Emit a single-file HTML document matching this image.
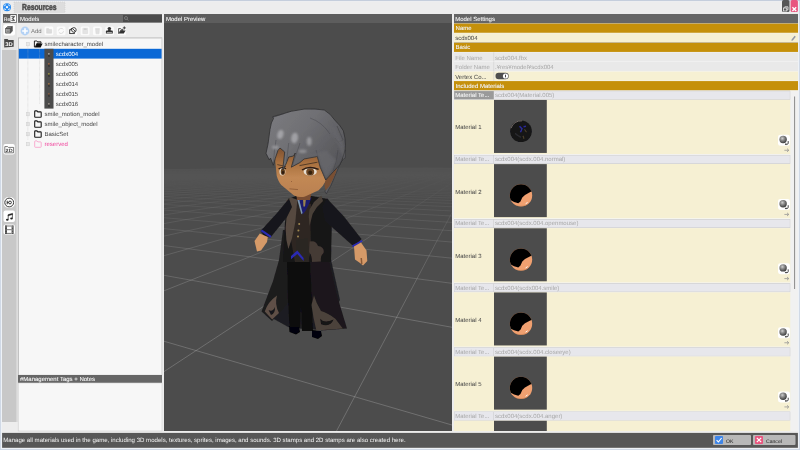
<!DOCTYPE html>
<html><head><meta charset="utf-8">
<style>
*{margin:0;padding:0;box-sizing:border-box}
html,body{width:800px;height:450px;overflow:hidden;background:#ececec;text-rendering:geometricPrecision;font-family:"Liberation Sans",sans-serif;font-size:6px;color:#333}
.a{position:absolute}
.t{position:absolute;white-space:nowrap;line-height:10px;font-size:6px;color:#444}
.h{position:absolute;white-space:nowrap;line-height:9px;font-size:6px;color:#ececec;text-shadow:0 0 .3px rgba(255,255,255,.6)}
.g{color:#a8a8a8}
svg{position:absolute;left:0;top:0}
</style></head><body>

<svg width="800" height="450" viewBox="0 0 800 450">
<rect x="0.00" y="0.00" width="800.00" height="450.00" fill="#ccd6e4" />
<rect x="0.00" y="0.00" width="800.00" height="1.00" fill="#c0cad8" />
<rect x="0.90" y="0.90" width="798.20" height="448.20" fill="#eef2f7" />
<rect x="2.00" y="1.30" width="796.00" height="446.50" fill="#ededed" />
<circle cx="7" cy="7.2" r="4" fill="#2b8df2"/>
<rect x="14.00" y="2.00" width="51.00" height="10.50" fill="#dddddd" stroke="#c8c8c8" stroke-width=".5" stroke-dasharray="1 1"/>
<rect x="782.00" y="0.00" width="7.50" height="12.00" fill="#565656" rx="1.5"/>
<rect x="790.60" y="0.00" width="7.30" height="12.00" fill="#e8557f" rx="1.5"/>
<rect x="3.00" y="14.00" width="13.80" height="8.80" fill="#5f5f5f" />
<rect x="10.30" y="15.00" width="5.80" height="7.00" fill="#fff" rx=".8"/>
<rect x="18.00" y="14.00" width="144.00" height="8.80" fill="#6b6b6b" />
<rect x="123.00" y="15.00" width="39.00" height="7.00" fill="#4b4b4b" />
<rect x="164.00" y="14.00" width="288.00" height="9.00" fill="#5d5d5d" />
<rect x="454.00" y="14.00" width="344.00" height="9.60" fill="#666" />
<rect x="2.00" y="23.00" width="15.00" height="27.00" fill="#e6e6e6" />
<rect x="2.00" y="50.00" width="14.70" height="372.00" fill="#c8c8c8" />
<rect x="16.70" y="50.00" width="1.30" height="372.00" fill="#dedede" />
<rect x="3.40" y="24.20" width="11.60" height="11.40" fill="#fff" rx="2"/>
<rect x="3.40" y="144.00" width="11.40" height="10.50" fill="#fff" rx="2"/>
<rect x="3.50" y="197.00" width="11.50" height="11.00" fill="#fff" rx="5"/>
<rect x="3.50" y="210.50" width="11.50" height="11.50" fill="#fff" rx="2"/>
<rect x="3.50" y="224.50" width="11.50" height="10.00" fill="#fff" rx="2"/>
<circle cx="25" cy="31" r="4.4" fill="#b4d2f5"/>
<rect x="44.50" y="26.50" width="8.80" height="8.80" fill="#fbfbfb" rx="1.5"/>
<rect x="56.70" y="26.50" width="8.80" height="8.80" fill="#fbfbfb" rx="1.5"/>
<rect x="68.50" y="26.50" width="8.80" height="8.80" fill="#fbfbfb" rx="1.5"/>
<rect x="80.70" y="26.50" width="8.80" height="8.80" fill="#fbfbfb" rx="1.5"/>
<rect x="93.00" y="26.50" width="8.80" height="8.80" fill="#fbfbfb" rx="1.5"/>
<rect x="105.20" y="26.50" width="8.80" height="8.80" fill="#fbfbfb" rx="1.5"/>
<rect x="117.30" y="26.50" width="8.80" height="8.80" fill="#fbfbfb" rx="1.5"/>
<rect x="18.20" y="37.50" width="143.80" height="337.50" fill="#f7f7f7" stroke="#d8d8d8" stroke-width=".6"/>
<rect x="18.20" y="37.40" width="143.80" height="1.10" fill="#c6c6c6" />
<rect x="161.60" y="38.00" width="0.60" height="337.00" fill="#cfcfcf" />
<rect x="18.05" y="38.00" width="0.85" height="393.00" fill="#bcbcbc" />
<rect x="18.80" y="48.80" width="142.80" height="9.80" fill="#0a68d6" />
<rect x="44.40" y="48.80" width="9.10" height="59.80" fill="#4b4b4b" />
<rect x="18.00" y="375.00" width="144.00" height="8.40" fill="#666" />
<rect x="18.20" y="383.00" width="143.80" height="48.00" fill="#f7f7f7" stroke="#d4d4d4" stroke-width=".6"/>
<rect x="164.00" y="23.00" width="288.00" height="408.00" fill="#4c4c4c" />
<rect x="454.00" y="23.58" width="344.00" height="407.42" fill="#f6f6f6" />
<rect x="454.00" y="23.58" width="344.00" height="9.18" fill="#c5900a" />
<rect x="454.00" y="33.17" width="344.00" height="9.18" fill="#f6f0d3" />
<rect x="454.00" y="42.05" width="344.00" height="0.50" fill="#9a9a9a" />
<rect x="454.00" y="42.75" width="344.00" height="9.18" fill="#c5900a" />
<rect x="454.00" y="52.33" width="40.00" height="9.18" fill="#e9e9e9" />
<rect x="494.40" y="52.33" width="303.60" height="9.18" fill="#e9e9e9" />
<rect x="454.00" y="61.92" width="40.00" height="9.18" fill="#e9e9e9" />
<rect x="494.40" y="61.92" width="303.60" height="9.18" fill="#e9e9e9" />
<rect x="454.00" y="71.50" width="40.00" height="9.18" fill="#f6f0d3" />
<rect x="494.40" y="71.50" width="303.60" height="9.18" fill="#f6f0d3" />
<rect x="454.00" y="81.08" width="344.00" height="9.18" fill="#c5900a" />
<rect x="790.00" y="90.67" width="8.00" height="340.33" fill="#f1f1f1" />
<rect x="794.00" y="96.50" width="1.10" height="192.50" fill="#949494" />
<rect x="454.00" y="90.77" width="336.20" height="8.88" fill="#c2c2c2" />
<rect x="454.30" y="91.17" width="39.30" height="8.08" fill="#9a9a9a" />
<rect x="494.00" y="91.17" width="295.90" height="8.08" fill="#e7e7ec" />
<rect x="454.00" y="99.85" width="336.30" height="54.28" fill="#f6f0d3" />
<rect x="494.00" y="99.95" width="52.80" height="53.00" fill="#4c4c4c" />
<rect x="454.00" y="154.93" width="336.20" height="8.88" fill="#c2c2c2" />
<rect x="454.30" y="155.33" width="39.30" height="8.08" fill="#e7e7ec" />
<rect x="494.00" y="155.33" width="295.90" height="8.08" fill="#e7e7ec" />
<rect x="454.00" y="164.02" width="336.30" height="54.28" fill="#f6f0d3" />
<rect x="494.00" y="164.12" width="52.80" height="53.00" fill="#4c4c4c" />
<rect x="454.00" y="219.10" width="336.20" height="8.88" fill="#c2c2c2" />
<rect x="454.30" y="219.50" width="39.30" height="8.08" fill="#e7e7ec" />
<rect x="494.00" y="219.50" width="295.90" height="8.08" fill="#e7e7ec" />
<rect x="454.00" y="228.18" width="336.30" height="54.28" fill="#f6f0d3" />
<rect x="494.00" y="228.28" width="52.80" height="53.00" fill="#4c4c4c" />
<rect x="454.00" y="283.27" width="336.20" height="8.88" fill="#c2c2c2" />
<rect x="454.30" y="283.67" width="39.30" height="8.08" fill="#e7e7ec" />
<rect x="494.00" y="283.67" width="295.90" height="8.08" fill="#e7e7ec" />
<rect x="454.00" y="292.35" width="336.30" height="54.28" fill="#f6f0d3" />
<rect x="494.00" y="292.45" width="52.80" height="53.00" fill="#4c4c4c" />
<rect x="454.00" y="347.43" width="336.20" height="8.88" fill="#c2c2c2" />
<rect x="454.30" y="347.83" width="39.30" height="8.08" fill="#e7e7ec" />
<rect x="494.00" y="347.83" width="295.90" height="8.08" fill="#e7e7ec" />
<rect x="454.00" y="356.52" width="336.30" height="54.28" fill="#f6f0d3" />
<rect x="494.00" y="356.62" width="52.80" height="53.00" fill="#4c4c4c" />
<rect x="454.00" y="411.60" width="336.20" height="8.88" fill="#c2c2c2" />
<rect x="454.30" y="412.00" width="39.30" height="8.08" fill="#e7e7ec" />
<rect x="494.00" y="412.00" width="295.90" height="8.08" fill="#e7e7ec" />
<rect x="454.00" y="420.68" width="336.30" height="10.32" fill="#f6f0d3" />
<rect x="494.00" y="420.78" width="52.80" height="10.22" fill="#4c4c4c" />
<rect x="2.10" y="432.90" width="795.80" height="14.90" fill="#575757" />
<rect x="713.00" y="435.00" width="38.00" height="10.00" fill="#b8b8b8" rx="1"/>
<rect x="753.00" y="435.00" width="42.50" height="10.00" fill="#b8b8b8" rx="1"/>
<rect x="715.00" y="436.00" width="8.00" height="8.00" fill="#3f86e8" rx="1"/>
<rect x="755.00" y="436.00" width="8.00" height="8.00" fill="#e8557f" rx="1"/>
</svg>
<svg width="800" height="450" viewBox="0 0 800 450">
<defs><linearGradient id="gf" x1="0" y1="0" x2="0" y2="1" gradientUnits="objectBoundingBox">
</linearGradient>
<linearGradient id="fade" gradientUnits="userSpaceOnUse" x1="0" y1="167" x2="0" y2="431">
<stop offset="0" stop-color="#fff" stop-opacity="0"/>
<stop offset="0.004" stop-color="#fff" stop-opacity=".06"/>
<stop offset="0.03" stop-color="#fff" stop-opacity=".08"/>
<stop offset="0.07" stop-color="#fff" stop-opacity=".12"/>
<stop offset="0.125" stop-color="#fff" stop-opacity=".22"/>
<stop offset="0.23" stop-color="#fff" stop-opacity=".45"/>
<stop offset="0.38" stop-color="#fff" stop-opacity=".72"/>
<stop offset="0.57" stop-color="#fff" stop-opacity=".95"/>
<stop offset="1" stop-color="#fff" stop-opacity="1"/>
</linearGradient>
<mask id="gm" maskUnits="userSpaceOnUse" x="164" y="23" width="288" height="408"><rect x="164" y="160" width="288" height="271" fill="url(#fade)"/></mask>
<clipPath id="pc"><rect x="164" y="23" width="288" height="408"/></clipPath>
</defs>
<g clip-path="url(#pc)"><g mask="url(#gm)" stroke="#b8b8b8" stroke-width=".55" fill="none" stroke-opacity=".62">
<path d="M333.9 436.0L457.0 203.0M457.0 426.5L159.0 339.8M159.0 374.9L457.0 179.5M457.0 328.2L159.0 274.4M159.0 292.8L457.0 174.5M457.0 284.0L159.0 244.9M159.0 257.1L457.0 172.4M457.0 258.7L159.0 228.1M159.0 237.2L457.0 171.2M457.0 242.5L159.0 217.3M159.0 224.5L457.0 170.4M457.0 231.1L159.0 209.7M159.0 215.7L457.0 169.9M457.0 222.7L159.0 204.1M159.0 209.3L457.0 169.5M457.0 216.3L159.0 199.8M159.0 204.3L457.0 169.2M457.0 211.2L159.0 196.4M159.0 200.4L457.0 169.0M457.0 207.0L159.0 193.6M159.0 197.2L457.0 168.8M457.0 203.6L159.0 191.4M159.0 194.6L457.0 168.7M457.0 200.7L159.0 189.4M159.0 192.4L457.0 168.5M457.0 198.2L159.0 187.8M159.0 190.5L457.0 168.4M457.0 196.1L159.0 186.4M159.0 188.9L457.0 168.3M457.0 194.2L159.0 185.1M159.0 187.5L457.0 168.2M457.0 192.6L159.0 184.0M159.0 186.2L457.0 168.2M457.0 191.1L159.0 183.1M159.0 185.2L457.0 168.1M457.0 189.8L159.0 182.2M159.0 184.2L457.0 168.0M457.0 188.7L159.0 181.4M159.0 183.3L457.0 168.0M457.0 187.6L159.0 180.7M159.0 182.5L456.2 168.0M457.0 186.7L159.0 180.1M159.0 181.8L455.2 168.0M457.0 185.8L159.0 179.5M159.0 181.1L454.3 168.0M457.0 185.0L159.0 179.0M159.0 180.5L453.3 168.0M457.0 184.3L159.0 178.5M159.0 180.0L452.4 168.0M457.0 183.6L159.0 178.1M159.0 179.5L451.4 168.0M457.0 183.0L159.0 177.6M159.0 179.0L450.5 168.0M457.0 182.4L159.0 177.3M159.0 178.6L449.6 168.0M457.0 181.9L159.0 176.9M159.0 178.2L448.6 168.0M457.0 181.4L159.0 176.6M159.0 177.8L447.7 168.0M457.0 180.9L159.0 176.3M159.0 177.4L446.8 168.0M457.0 180.5L159.0 176.0M159.0 177.1L445.9 168.0M457.0 180.0L159.0 175.7M159.0 176.8L444.9 168.0M457.0 179.7L159.0 175.4M159.0 176.5L444.0 168.0M457.0 179.3L159.0 175.2M159.0 176.2L443.1 168.0M457.0 178.9L159.0 175.0M159.0 176.0L442.2 168.0M457.0 178.6L159.0 174.7M159.0 175.7L441.3 168.0M457.0 178.3L159.0 174.5M159.0 175.5L440.4 168.0M457.0 178.0L159.0 174.3M159.0 175.3L439.4 168.0M457.0 177.7L159.0 174.2M159.0 175.0L438.5 168.0M457.0 177.5L159.0 174.0M159.0 174.9L437.6 168.0M457.0 177.2L159.0 173.8M159.0 174.7L436.7 167.9M457.0 177.0L159.0 173.6M159.0 174.5L435.8 167.9M457.0 176.8L159.0 173.5M159.0 174.3L434.9 167.9M457.0 176.5L159.0 173.4M159.0 174.1L434.0 167.9M457.0 176.3L159.0 173.2M159.0 174.0L433.1 167.9M457.0 176.1L159.0 173.1M159.0 173.8L432.2 167.9M457.0 175.9L159.0 173.0M159.0 173.7L431.3 167.9M457.0 175.8L159.0 172.8M159.0 173.6L430.4 167.9M457.0 175.6L159.0 172.7M159.0 173.4L429.5 167.9M457.0 175.4L159.0 172.6M159.0 173.3L428.7 167.9M457.0 175.2L159.0 172.5M159.0 173.2L427.8 167.9M457.0 175.1L159.0 172.4M159.0 173.1L426.9 167.9M457.0 174.9L159.0 172.3M159.0 172.9L426.0 167.9M457.0 174.8L159.0 172.2M159.0 172.8L425.1 167.9M457.0 174.7L159.0 172.1M159.0 172.7L424.2 167.9M457.0 174.5L159.0 172.0M159.0 172.6L423.4 167.9M457.0 174.4L159.0 171.9M159.0 172.5L422.5 167.9M457.0 174.3L159.0 171.8M159.0 172.4L421.6 167.9M457.0 174.1L159.0 171.8M159.0 172.3L420.7 167.9M457.0 174.0L159.0 171.7M159.0 172.3L419.9 167.9M457.0 173.9L159.0 171.6M159.0 172.2L419.0 167.9M457.0 173.8L159.0 171.5M159.0 172.1L418.1 167.9M457.0 173.7L159.0 171.5M159.0 172.0L417.3 167.9M457.0 173.6L159.0 171.4M159.0 171.9L416.4 167.9M457.0 173.5L159.0 171.3M159.0 171.9L415.5 167.9M457.0 173.4L159.0 171.3M159.0 171.8L414.7 167.9M457.0 173.3L159.0 171.2M159.0 171.7L413.8 167.9M457.0 173.2L159.0 171.1M159.0 171.6L413.0 167.9M457.0 173.1L159.0 171.1M159.0 171.6L412.1 167.9M457.0 173.0L159.0 171.0M159.0 171.5L411.2 167.9M457.0 172.9L159.0 171.0M159.0 171.4L410.4 167.9M457.0 172.9L159.0 170.9M159.0 171.4L409.5 167.9M457.0 172.8L159.0 170.8M159.0 171.3L408.7 167.9M457.0 172.7L159.0 170.8M159.0 171.3L407.8 167.9M457.0 172.6L159.0 170.7M159.0 171.2L407.0 167.9M457.0 172.6L159.0 170.7M159.0 171.2L406.2 167.9M457.0 172.5L159.0 170.7M159.0 171.1L405.3 167.9M457.0 172.4L159.0 170.6M159.0 171.1L404.5 167.9M457.0 172.3L159.0 170.6M159.0 171.0L403.6 167.9M457.0 172.3L159.0 170.5M159.0 171.0L402.8 167.9M457.0 172.2L159.0 170.5M159.0 170.9L402.0 167.9M457.0 172.2L159.0 170.4M159.0 170.9L401.1 167.9M457.0 172.1L159.0 170.4M159.0 170.8L400.3 167.9M457.0 172.0L159.0 170.3M159.0 170.8L399.5 167.9M457.0 172.0L159.0 170.3M159.0 170.7L398.6 167.9M457.0 171.9L159.0 170.3M159.0 170.7L397.8 167.9M457.0 171.9L159.0 170.2M159.0 170.6L397.0 167.9M457.0 171.8L159.0 170.2M159.0 170.6L396.2 167.9M457.0 171.7L159.0 170.2M159.0 170.6L395.3 167.9M457.0 171.7L159.0 170.1M159.0 170.5L394.5 167.9M457.0 171.6L159.0 170.1M159.0 170.5L393.7 167.9M457.0 171.6L159.0 170.1M159.0 170.4L392.9 167.9M457.0 171.5L159.0 170.0M159.0 170.4L392.1 167.9M457.0 171.5L159.0 170.0M159.0 170.4L391.3 167.9M457.0 171.5L159.0 170.0M159.0 170.3L390.4 167.9M457.0 171.4L159.0 169.9M159.0 170.3L389.6 167.9M457.0 171.4L159.0 169.9M159.0 170.3L388.8 167.9M457.0 171.3L159.0 169.9M159.0 170.2L388.0 167.9M457.0 171.3L159.0 169.8M159.0 170.2L387.2 167.9M457.0 171.2L159.0 169.8M159.0 170.2L386.4 167.9M457.0 171.2L159.0 169.8M159.0 170.1L385.6 167.9M457.0 171.1L159.0 169.8M159.0 170.1L384.8 167.9M457.0 171.1L159.0 169.7M159.0 170.1L384.0 167.9M457.0 171.1L159.0 169.7M159.0 170.0L383.2 167.9M457.0 171.0L159.0 169.7M159.0 170.0L382.4 167.9M457.0 171.0L159.0 169.7M159.0 170.0L381.6 167.9M457.0 171.0L159.0 169.6M159.0 170.0L380.8 167.9M457.0 170.9L159.0 169.6M159.0 169.9L380.0 167.9M457.0 170.9L159.0 169.6M159.0 169.9L379.2 167.9M457.0 170.8L159.0 169.6M159.0 169.9L378.5 167.9M457.0 170.8L159.0 169.5M159.0 169.9L377.7 167.9M457.0 170.8L159.0 169.5M159.0 169.8L376.9 167.9M457.0 170.7L159.0 169.5M159.0 169.8L376.1 167.9M457.0 170.7L159.0 169.5M159.0 169.8L375.3 167.9M457.0 170.7L159.0 169.5M159.0 169.8L374.5 167.9M457.0 170.7L159.0 169.4M159.0 169.7L373.8 167.9M457.0 170.6L159.0 169.4M159.0 169.7L373.0 167.9M457.0 170.6L159.0 169.4M159.0 169.7L372.2 167.9M457.0 170.6L159.0 169.4M159.0 169.7L371.4 167.9M457.0 170.5L159.0 169.4M159.0 169.6L370.6 167.9M457.0 170.5L159.0 169.3"/>
</g>
<defs>
<filter id="soft" x="-5%" y="-5%" width="110%" height="110%"><feGaussianBlur stdDeviation="0.35"/></filter>
<filter id="soft2" x="-20%" y="-20%" width="140%" height="140%"><feGaussianBlur stdDeviation="1.2"/></filter>
<linearGradient id="hairg" x1="0" y1="0" x2="1" y2=".7"><stop offset="0" stop-color="#7c7c80"/><stop offset=".45" stop-color="#707074"/><stop offset=".8" stop-color="#5e5e62"/><stop offset="1" stop-color="#545458"/></linearGradient>
<linearGradient id="faceg" x1="0" y1="0" x2="0" y2="1"><stop offset="0" stop-color="#7d5030"/><stop offset=".3" stop-color="#a8703f"/><stop offset=".6" stop-color="#c28854"/><stop offset="1" stop-color="#b98050"/></linearGradient>
</defs>
<g filter="url(#soft)">
<!-- coat back (between panels) -->
<polygon points="284,255 330,255 340,300 322,330 290,328 272,318" fill="#1f1e22"/>
<!-- left coat panel -->
<polygon points="283,230 279,260 273,281 261.5,311.5 272,321 284,308 290,300 291,260 292,230" fill="#1d1b1e"/>
<!-- right coat panel -->
<polygon points="308,230 308.5,262 313,313 321,330.5 347,328.5 337,295.5 329,260 327,225" fill="#1b191c"/>
<!-- legs -->
<polygon points="287,262 310,262 312,300 313,331 302,331 301,306 300,328 289.5,328 288,300" fill="#0e0e10"/>
<!-- boots -->
<polygon points="289,326 299,327 300,332 296,334.5 289.5,332" fill="#060607"/>
<polygon points="312,330 321,331 322,336 318,339 312,337" fill="#060607"/>
<!-- coat flame patterns -->
<path d="M264.8 311.6 Q267.5 302 277 295.4 Q274.4 304 279 313 L272.2 319.6 Z" fill="#5e5046"/>
<path d="M268.6 310 Q272.5 312.4 275 307 Q275.4 313.4 271 315 Z" fill="#18161a"/>
<path d="M311.5 305 L314 295.6 Q316 303 321 311 Q328 313 335.3 318.7 L342.8 328.6 L316.4 330.6 L313.6 318 Z" fill="#4c423b"/>
<path d="M320.2 318.7 Q324 323.7 333.6 319.6 Q330.4 327.4 321.1 324.2 Z" fill="#141214"/>
<!-- torso -->
<polygon points="288,199 296,196 312,196 328,199 332,215 331,262 283,262 285,222" fill="#171518"/>
<!-- vest -->
<polygon points="295,200 311,204 310.5,226 311,250 308,262 295,262 291,240 293,215" fill="#2f2824"/>
<polygon points="296,240 308,238 309,262 296,262" fill="#2b2624"/>
<!-- lapels -->
<polygon points="286.4,200 291,197.5 297.3,199.8 296.2,212 295.3,222 292,238 288.4,249 286.4,240 285.6,228 287,212" fill="#564a41"/>
<polygon points="321.3,195.5 323,201 317,207 312.6,214 309.5,226 308.8,216 309.6,209.6 314,202" fill="#4a4038"/>
<path d="M309.6 241.6 Q316 240 318 246 Q325 247 323.5 253 Q320 256 321 261.5 L312 262 Q312 255 309 252 Z" fill="#453a34"/>
<path d="M291 256 L297.3 250.6 L303.6 258 L303.6 261 L297.3 254 L291 259.2Z" fill="#2a2ab4"/>
<!-- shirt -->
<polygon points="297.5,198 311.5,197.5 309.5,203 305.5,211 302.6,214.5" fill="#1d1d6e"/>
<polygon points="297.3,199.5 299.2,199.5 302.6,213 301.4,214.2" fill="#7f97ad"/>
<polygon points="303,198.5 306,198.5 305,206.5 303.4,206.5" fill="#9a8250"/>
<circle cx="299.2" cy="224" r="1" fill="#a08850"/><circle cx="298.4" cy="230.5" r="1" fill="#a08850"/><circle cx="298" cy="236.6" r="1" fill="#a08850"/>
<!-- left arm -->
<polygon points="289,198.5 277,213 260.5,231 264,236 270.5,237.5 287,217 292,207" fill="#19181b"/>
<polygon points="260.3,231 262.3,229.8 271.5,236 270.4,237.8" fill="#2a2ab4"/>
<polygon points="259.8,233.5 267.8,237 267,242 261,250.5 257,251.5 254.5,241" fill="#d69a68"/>
<!-- right arm -->
<polygon points="327,198.5 344,216.5 361.5,239 358,243.5 352.3,245.3 325,221 322,207" fill="#19181b"/>
<polygon points="352,245.6 361.8,240 362.6,241.6 353,247.2" fill="#2a2ab4"/>
<polygon points="354,246.5 361,242.5 366.5,250.5 367.3,261 363,265.5 360,263 355,259.5" fill="#d69a68"/>
<polygon points="360.5,258 362,258 362.5,264 361,264" fill="#8a5a38"/>
<!-- back hair right -->
<polygon points="336,150 345.5,150 345.1,158 342,160.2 339.7,164.9 335,175.8 331.1,185.1 326.4,193.9 324.8,191 328.5,185 331,176 335,163" fill="#5c5c60" stroke="#2e2e30" stroke-width=".6"/>
<!-- neck -->
<polygon points="296,192 312,190 310,200 297,200" fill="#7a4e30"/>
<!-- face -->
<path d="M274.5 148 L275.3 162 L276.7 175.7 Q278.5 182 281.3 185 L294 195.5 Q300 198 305 196.5 L318.7 190.3 Q323 186.5 325.7 181 L334 168 L334 148 Z" fill="url(#faceg)"/>
<!-- ear shadow -->
<polygon points="326,178 331,170 338,162.5 336,172 333,179 329.5,186 325.5,190.5 324.5,185" fill="#7a4f32"/>
<!-- eyes -->
<ellipse cx="282.4" cy="171.6" rx="3" ry="3.9" fill="#e6ddd0"/>
<ellipse cx="282.9" cy="171.8" rx="2.1" ry="3.3" fill="#63401f"/>
<ellipse cx="283" cy="172.4" rx="1.1" ry="1.7" fill="#2e1c10"/>
<path d="M278.6 169 Q282 166.2 286 168.8" stroke="#2a1c14" stroke-width="1.3" fill="none"/>
<ellipse cx="310.2" cy="171.8" rx="6.6" ry="3.9" fill="#e6ddd0"/>
<ellipse cx="310.2" cy="171.9" rx="4" ry="3.7" fill="#714a26"/>
<ellipse cx="310.2" cy="172.6" rx="2" ry="2.1" fill="#36200f"/>
<path d="M302 170 Q309 165.2 318.6 169.4" stroke="#2a1c14" stroke-width="1.5" fill="none"/>
<path d="M277.3 164.6 L286 166.6" stroke="#4a3424" stroke-width=".8"/>
<path d="M299.5 165.6 L317.5 162.2" stroke="#4a3424" stroke-width=".9"/>
<path d="M289.5 188.8 L298 189.6" stroke="#7a4a2c" stroke-width=".6"/>
<circle cx="291.5" cy="181.5" r=".5" fill="#8a5a38"/>
<!-- hair -->
<path d="M269.3 160 L266 153.3 L268 144 L270 129.3 Q271 122 273.5 118.5 L272.7 116.7 L279 115 Q291 110.5 304 109.1 Q316 108.6 324.3 110 Q331 114 334.7 120 Q340 125 343.3 130.7 Q345.6 138 345.4 145.3 L345.1 150 L342 160.2 L339.7 164.9 L333.5 171.5 L325.7 180 L320.2 167.2 L317.3 156.5 L304 159 L300 162.5 L291.3 167.2 L295.3 153 L293.5 156 L288.7 157 L286 164 L282.7 169.7 L284.7 152 L280 148 L278 150.3 L275.3 158.3 L273.3 165.2 L270.5 158 Z" fill="url(#hairg)" stroke="#2e2e30" stroke-width=".8" stroke-linejoin="round"/>
<path d="M272.5 117.5 L284 113.6 M337 126 L343 140 M335 138 L341.5 146 M338 142 L342.5 140.5" stroke="#3c3c40" stroke-width=".5" fill="none"/>
<path d="M288.7 143 L286.7 161 M300 143 Q296 155 292.5 165 M316 150 Q319 165 325.5 179 M338 150 Q337 162 333 171 M276 140 Q274 152 273.5 163 M310 118 Q322 122 330 134" stroke="#38383c" stroke-width=".5" fill="none" opacity=".65"/>
<!-- hair highlights -->
<g filter="url(#soft2)" opacity=".8">
<ellipse cx="280.4" cy="134.5" rx="3" ry="4.6" fill="#aeaeb2" transform="rotate(15 280.4 134.5)"/>
<ellipse cx="294.6" cy="138" rx="3.4" ry="5.4" fill="#acacb0" transform="rotate(10 294.6 138)"/>
<ellipse cx="309.2" cy="141.3" rx="2.4" ry="4.4" fill="#a4a4a8"/>
<ellipse cx="275.3" cy="147.3" rx="3.4" ry="1.8" fill="#a2a2a6"/>
<ellipse cx="302.7" cy="151.3" rx="4" ry="1.8" fill="#98989c"/>
<path d="M330 122 Q339 130 343.5 146 L344 160 Q339 142 330 132Z" fill="#66666a"/>
<path d="M302 158 L318 155 L321 166 L326 178 L332 170 L336 160 L326 150 Z" fill="#68686c"/>
</g>
</g>

</g></svg>
<svg width="800" height="450" viewBox="0 0 800 450">
<defs>
<radialGradient id="sph" cx=".4" cy=".35" r=".7"><stop offset="0" stop-color="#cfcfcf"/><stop offset=".4" stop-color="#8a8a8a"/><stop offset="1" stop-color="#333"/></radialGradient>
<filter id="b3" x="-10%" y="-10%" width="120%" height="120%"><feGaussianBlur stdDeviation="0.3"/></filter>
<filter id="b5" x="-30%" y="-30%" width="160%" height="160%"><feGaussianBlur stdDeviation="0.6"/></filter>
<clipPath id="sc"><circle cx="0" cy="0" r="11.2"/></clipPath>
</defs>
<g fill="none" stroke="#fff" stroke-width=".7"><circle cx="7" cy="7.2" r="1.1" fill="#fff" stroke="none"/><path d="M4.7 6.2V4.9H6M8 4.9H9.3V6.2M9.3 8.2V9.5H8M6 9.5H4.7V8.2"/></g>
<g fill="none" stroke="#e8e8e8" stroke-width=".8"><rect x="783.6" y="8" width="3.2" height="3"/><path d="M784.8 8V6.8H788V9.8H786.8"/></g>
<path d="M792.4 7.2L796.2 11M796.2 7.2L792.4 11" stroke="#fff" stroke-width="1.3" fill="none"/>
<path d="M11.6 16.2H14.6V17L13 18.5L14.6 20V20.8H11.6V20.2H13.6L12 18.5L13.6 16.8H11.6Z" fill="#444" stroke="#444" stroke-width=".4"/>
<g fill="none" stroke="#8a8a8a" stroke-width=".7"><circle cx="126" cy="18" r="1.5"/><path d="M127.1 19.1L128.4 20.6"/></g>
<g filter="url(#b3)">
<g stroke="#484848" stroke-width=".7" stroke-linejoin="round"><path d="M5.6 28.5H10.3V33.1H5.6Z" fill="#b0b0b0"/><path d="M5.6 28.5L7.6 26.6H12.3L10.3 28.5Z" fill="#7c7c7c"/><path d="M10.3 28.5L12.3 26.6V31.2L10.3 33.1Z" fill="#5a5a5a"/></g><path d="M6.8 30H9.2M6.8 31.6H9.2" stroke="#666" stroke-width=".6"/>
<path d="M4.2 38.9H7.6L8.4 40H13.7V46.7L4.2 47.4Z" fill="#4a4a4a"/>
<text x="5.2" y="45.6" font-family="Liberation Sans" font-weight="bold" font-size="5.6" fill="#fff" textLength="7.4" lengthAdjust="spacingAndGlyphs">3D</text>
<g fill="none" stroke="#444" stroke-width=".7"><path d="M4.8 146.6H7.6L8.4 147.4H13.6V152.8H4.8Z"/></g>
<text x="5.6" y="152" font-family="Liberation Sans" font-weight="bold" font-size="4.6" fill="#444" textLength="7" lengthAdjust="spacingAndGlyphs">2D</text>
<g fill="none" stroke="#333" stroke-width="1"><circle cx="9.2" cy="202.5" r="4.4"/><circle cx="10" cy="202.5" r="1.4"/><path d="M7.2 200.7V204.3M7.2 202.5H8.6" /></g>
<g fill="#222" stroke="#222"><path d="M8 214.6L12.6 213.2V214.6L8 216Z" stroke-width=".3"/><path d="M8.2 215V219.6M12.4 213.8V218.4" stroke-width=".7" fill="none"/><ellipse cx="7.3" cy="219.8" rx="1.3" ry="1" stroke="none"/><ellipse cx="11.5" cy="218.6" rx="1.3" ry="1" stroke="none"/></g>
<rect x="5" y="225.4" width="2" height="8.6" fill="#4a4a4a"/><rect x="11.6" y="225.4" width="2" height="8.6" fill="#4a4a4a"/>
<path d="M7 226H11.6M7 229.7H11.6M7 233.4H11.6" stroke="#666" stroke-width=".9"/>
<path d="M6 226V233.6M12.6 226V233.6" stroke="#ddd" stroke-width=".6" stroke-dasharray=".6 .9"/>
</g>
<g filter="url(#b3)">
<path d="M25 28.2V33.8M22.2 31H27.8" stroke="#fff" stroke-width="1.6" fill="none"/>
<path d="M46.6 28.6H48.6L49.2 29.4H51.6V33.2H46.6Z" fill="#dcdcdc" stroke="#d0d0d0" stroke-width=".5"/>
<g fill="none" stroke="#d4d4d4" stroke-width=".8"><path d="M58.6 30.6A2.6 2.6 0 0 1 63.4 29.6"/><path d="M63.6 31.2A2.6 2.6 0 0 1 58.8 32.2"/></g>
<path d="M69.6 29.8L71.6 28H73V29.8Z" fill="#333"/><rect x="69.7" y="29.8" width="4.6" height="3.8" fill="#fafafa" stroke="#333" stroke-width=".9"/><circle cx="73.9" cy="29.9" r="2.3" fill="#fafafa" stroke="#333" stroke-width=".9"/><path d="M72.3 28.3L75.5 31.5" stroke="#333" stroke-width=".9"/>
<path d="M82.8 28.2H87.6V33.6H82.8Z" fill="#e4e4e4" stroke="#d8d8d8" stroke-width=".5"/><rect x="83.8" y="28.4" width="2.8" height="1.6" fill="#d0d0d0"/>
<path d="M95.6 29H99.4L99 33.8H96Z" fill="#e0e0e0" stroke="#d6d6d6" stroke-width=".5"/><path d="M95.2 28.6H99.8" stroke="#d0d0d0" stroke-width=".6"/>
<g fill="#333"><ellipse cx="109.35" cy="28.5" rx="1.75" ry="1.6"/><path d="M108.3 29.4H110.4L110.9 31H107.8Z"/><path d="M106.6 30.6H112.1Q112.8 30.6 112.8 31.4V33.5H105.9V31.4Q105.9 30.6 106.6 30.6Z"/></g><rect x="106.8" y="32" width="5.1" height=".6" fill="#f4f4f4"/>
<path d="M118.6 28.6H120.6L121.2 29.4H123V30.6H120.4L119 33.4H118.6Z" fill="none" stroke="#333" stroke-width=".8"/><path d="M119 33.6L120.6 30.6H125.6L123.8 33.6Z" fill="#333"/><path d="M124.3 26.4V29.4M122.8 27.9H125.8" stroke="#333" stroke-width=".9"/>
</g>
<g filter="url(#b3)">
<rect x="26.3" y="42.4" width="3.2" height="3.4" fill="#e8e8e8" stroke="#cfcfcf" stroke-width=".5"/>
<rect x="26.3" y="112.4" width="3.2" height="3.4" fill="#e8e8e8" stroke="#cfcfcf" stroke-width=".5"/>
<rect x="26.3" y="122.4" width="3.2" height="3.4" fill="#e8e8e8" stroke="#cfcfcf" stroke-width=".5"/>
<rect x="26.3" y="132.4" width="3.2" height="3.4" fill="#e8e8e8" stroke="#cfcfcf" stroke-width=".5"/>
<rect x="26.3" y="142.4" width="3.2" height="3.4" fill="#e8e8e8" stroke="#cfcfcf" stroke-width=".5"/>
<path d="M34.4 41H37L37.8 41.8H41V43.2H37L35.4 47H34.4Z" fill="none" stroke="#111" stroke-width=".9"/><path d="M35.2 47.4L37 43.4H42.6L40.6 47.4Z" fill="#111"/>
<path d="M34.7 111.5Q34.7 110.89999999999999 35.3 110.89999999999999H37L37.8 111.89999999999999H40.6Q41.2 111.89999999999999 41.2 112.5V116.7Q41.2 117.3 40.6 117.3H35.3Q34.7 117.3 34.7 116.7Z" fill="none" stroke="#1c1c1c" stroke-width="1.1" stroke-linejoin="round"/>
<path d="M34.7 121.5Q34.7 120.89999999999999 35.3 120.89999999999999H37L37.8 121.89999999999999H40.6Q41.2 121.89999999999999 41.2 122.5V126.7Q41.2 127.3 40.6 127.3H35.3Q34.7 127.3 34.7 126.7Z" fill="none" stroke="#1c1c1c" stroke-width="1.1" stroke-linejoin="round"/>
<path d="M34.7 131.5Q34.7 130.9 35.3 130.9H37L37.8 131.9H40.6Q41.2 131.9 41.2 132.5V136.70000000000002Q41.2 137.3 40.6 137.3H35.3Q34.7 137.3 34.7 136.70000000000002Z" fill="none" stroke="#1c1c1c" stroke-width="1.1" stroke-linejoin="round"/>
<path d="M34.7 141.5Q34.7 140.9 35.3 140.9H37L37.8 141.9H40.6Q41.2 141.9 41.2 142.5V146.70000000000002Q41.2 147.3 40.6 147.3H35.3Q34.7 147.3 34.7 146.70000000000002Z" fill="none" stroke="#f8a4cc" stroke-width="0.9" stroke-linejoin="round"/>
<path d="M27.9 46.5V140M39.6 49V104" stroke="#b8b8b8" stroke-width=".45" stroke-dasharray=".6 .6" fill="none"/>
<rect x="48.5" y="54.2" width=".9" height="2.6" fill="#222"/><rect x="48.4" y="53.2" width="1" height="1.4" fill="#e8e8e8"/>
<rect x="48.5" y="64.2" width=".9" height="2.6" fill="#222"/><rect x="48.4" y="63.2" width="1" height="1.4" fill="#e07838"/>
<rect x="48.5" y="74.19999999999999" width=".9" height="2.6" fill="#222"/><rect x="48.4" y="73.19999999999999" width="1" height="1.4" fill="#d8c838"/>
<rect x="48.5" y="84.19999999999999" width=".9" height="2.6" fill="#222"/><rect x="48.4" y="83.19999999999999" width="1" height="1.4" fill="#e09040"/>
<rect x="48.5" y="94.19999999999999" width=".9" height="2.6" fill="#222"/><rect x="48.4" y="93.19999999999999" width="1" height="1.4" fill="#b06838"/>
<rect x="48.5" y="104.19999999999999" width=".9" height="2.6" fill="#222"/><rect x="48.4" y="103.19999999999999" width="1" height="1.4" fill="#d8c8b8"/>
</g>
<g filter="url(#b3)">
<path d="M791.6 39.4L794.6 35.8L795.8 36.8L792.8 40.4L791.4 40.8Z" fill="#9298a6"/>
<rect x="495.5" y="72.80" width="13.2" height="6.4" rx="3.2" fill="#4f4f4f"/><circle cx="505.5" cy="76.00" r="2.6" fill="#fff"/><rect x="505.1" y="74.50" width=".9" height="3" rx=".4" fill="#333"/>
<rect x="493.7" y="52.33" width=".5" height="9.18" fill="#c4c4c4"/>
<rect x="493.7" y="61.92" width=".5" height="9.18" fill="#c4c4c4"/>
<rect x="493.7" y="71.50" width=".5" height="9.18" fill="#c4c4c4"/>
<g transform="translate(521 131.25)">
<circle r="10.8" fill="#141416"/><path d="M-10 -3A10.4 10.4 0 0 1 1 -10.4" stroke="#7a726c" stroke-width=".9" fill="none"/><g filter="url(#b5)"><path d="M-1.5 -5L1 -2.5L-0.5 1M2.5 -4.5L5 -5" stroke="#2c2c96" stroke-width="1.5" fill="none"/><path d="M3.5 -2L5.5 1M2 4.5L3 7.5" stroke="#4a3e2c" stroke-width="1.2" fill="none"/><path d="M-6 2Q-3 5 0 6" stroke="#2a2a2e" stroke-width="1.5" fill="none"/></g>
</g>
<rect x="778" y="134.85" width="12" height="11" rx="2.4" fill="#fff"/><circle cx="783.1" cy="139.55" r="3.7" fill="url(#sph)"/><path d="M788.2 141.05V143.25Q788.2 144.25 787 144.25H785.4" stroke="#444" stroke-width="1" fill="none"/><path d="M786.2 143.05L784.8 144.25L786.2 145.25" fill="#444"/>
<path d="M784.4 150.25H788.6M787 148.65L788.8 150.25L787 151.85" stroke="#909090" stroke-width=".75" fill="none"/>
<g transform="translate(521 195.42)">
<circle r="11.2" fill="#f0a070"/><g clip-path="url(#sc)"><path d="M-14 -14H14V-5L9.3 -3.3L4 -0.5L1.3 2L-0.5 6L-2.7 7.8L-7 6.6L-10.7 4.7L-14 4Z" fill="#060606"/><path d="M4.6 8.4L6.6 7" stroke="#fff" stroke-width=".9"/><path d="M-10 8Q-2 13 6 9.5" stroke="#c07848" stroke-width="1" fill="none" opacity=".5"/></g>
</g>
<rect x="778" y="199.02" width="12" height="11" rx="2.4" fill="#fff"/><circle cx="783.1" cy="203.72" r="3.7" fill="url(#sph)"/><path d="M788.2 205.22V207.42Q788.2 208.42 787 208.42H785.4" stroke="#444" stroke-width="1" fill="none"/><path d="M786.2 207.22L784.8 208.42L786.2 209.42" fill="#444"/>
<path d="M784.4 214.42H788.6M787 212.82L788.8 214.42L787 216.02" stroke="#909090" stroke-width=".75" fill="none"/>
<g transform="translate(521 259.58)">
<circle r="11.2" fill="#f0a070"/><g clip-path="url(#sc)"><path d="M-14 -14H14V-5L9.3 -3.3L4 -0.5L1.3 2L-0.5 6L-2.7 7.8L-7 6.6L-10.7 4.7L-14 4Z" fill="#060606"/><path d="M4.6 8.4L6.6 7" stroke="#fff" stroke-width=".9"/><path d="M-10 8Q-2 13 6 9.5" stroke="#c07848" stroke-width="1" fill="none" opacity=".5"/></g>
</g>
<rect x="778" y="263.18" width="12" height="11" rx="2.4" fill="#fff"/><circle cx="783.1" cy="267.88" r="3.7" fill="url(#sph)"/><path d="M788.2 269.38V271.58Q788.2 272.58 787 272.58H785.4" stroke="#444" stroke-width="1" fill="none"/><path d="M786.2 271.38L784.8 272.58L786.2 273.58" fill="#444"/>
<path d="M784.4 278.58H788.6M787 276.98L788.8 278.58L787 280.18" stroke="#909090" stroke-width=".75" fill="none"/>
<g transform="translate(521 323.75)">
<circle r="11.2" fill="#f0a070"/><g clip-path="url(#sc)"><path d="M-14 -14H14V-5L9.3 -3.3L4 -0.5L1.3 2L-0.5 6L-2.7 7.8L-7 6.6L-10.7 4.7L-14 4Z" fill="#060606"/><path d="M4.6 8.4L6.6 7" stroke="#fff" stroke-width=".9"/><path d="M-10 8Q-2 13 6 9.5" stroke="#c07848" stroke-width="1" fill="none" opacity=".5"/></g>
</g>
<rect x="778" y="327.35" width="12" height="11" rx="2.4" fill="#fff"/><circle cx="783.1" cy="332.05" r="3.7" fill="url(#sph)"/><path d="M788.2 333.55V335.75Q788.2 336.75 787 336.75H785.4" stroke="#444" stroke-width="1" fill="none"/><path d="M786.2 335.55L784.8 336.75L786.2 337.75" fill="#444"/>
<path d="M784.4 342.75H788.6M787 341.15L788.8 342.75L787 344.35" stroke="#909090" stroke-width=".75" fill="none"/>
<g transform="translate(521 387.92)">
<circle r="11.2" fill="#f0a070"/><g clip-path="url(#sc)"><path d="M-14 -14H14V-5L9.3 -3.3L4 -0.5L1.3 2L-0.5 6L-2.7 7.8L-7 6.6L-10.7 4.7L-14 4Z" fill="#060606"/><path d="M4.6 8.4L6.6 7" stroke="#fff" stroke-width=".9"/><path d="M-10 8Q-2 13 6 9.5" stroke="#c07848" stroke-width="1" fill="none" opacity=".5"/></g>
</g>
<rect x="778" y="391.52" width="12" height="11" rx="2.4" fill="#fff"/><circle cx="783.1" cy="396.22" r="3.7" fill="url(#sph)"/><path d="M788.2 397.72V399.92Q788.2 400.92 787 400.92H785.4" stroke="#444" stroke-width="1" fill="none"/><path d="M786.2 399.72L784.8 400.92L786.2 401.92" fill="#444"/>
<path d="M784.4 406.92H788.6M787 405.32L788.8 406.92L787 408.52" stroke="#909090" stroke-width=".75" fill="none"/>
</g>
<path d="M716.6 440.2L718.4 442L721.6 438" stroke="#fff" stroke-width="1.1" fill="none"/>
<path d="M756.8 437.8L761.2 442.2M761.2 437.8L756.8 442.2" stroke="#fff" stroke-width="1.2" fill="none"/>
</svg>
<div id="tx" style="position:absolute;left:0;top:0;width:800px;height:450px;will-change:transform">
<div class="t" style="left:22.2px;top:1.7px;font-size:8.8px;font-weight:bold;color:#4c4c4c;line-height:11px;transform:scaleX(.77);transform-origin:0 0;-webkit-text-stroke:.5px #4c4c4c">Resources</div>
<div class="h" style="left:3.80px;top:16.20px;width:6px;overflow:hidden;font-size:5.2px">Re</div>
<div class="h" style="left:20.00px;top:16.20px;">Models</div>
<div class="h" style="left:166.00px;top:16.30px;">Model Preview</div>
<div class="h" style="left:455.20px;top:15.50px;">Model Settings</div>
<div class="t" style="left:31.00px;top:27.00px;color:#777">Add</div>
<div class="t" style="left:44.50px;top:39.60px;">smilecharacter_model</div>
<div class="t" style="left:55.80px;top:50.40px;color:#fff">scdx004</div>
<div class="t" style="left:55.80px;top:60.40px;">scdx005</div>
<div class="t" style="left:55.80px;top:70.40px;">scdx006</div>
<div class="t" style="left:55.80px;top:80.40px;">scdx014</div>
<div class="t" style="left:55.80px;top:90.40px;">scdx015</div>
<div class="t" style="left:55.80px;top:100.40px;">scdx016</div>
<div class="t" style="left:44.50px;top:109.70px;">smile_motion_model</div>
<div class="t" style="left:44.50px;top:119.70px;">smile_object_model</div>
<div class="t" style="left:44.50px;top:129.70px;">BasicSet</div>
<div class="t" style="left:44.50px;top:139.70px;color:#f0409a">reserved</div>
<div class="h" style="left:20.00px;top:375.50px;color:#ececec">#Management Tags + Notes</div>
<div class="h" style="left:455.60px;top:24.68px;">Name</div>
<div class="t" style="left:455.20px;top:35.37px;line-height:9px">scdx004</div>
<div class="h" style="left:455.60px;top:44.35px;">Basic</div>
<div class="t g" style="left:455.20px;top:54.63px;line-height:9px">File Name</div>
<div class="t g" style="left:495.00px;top:54.63px;line-height:9px">scdx004.fbx</div>
<div class="t g" style="left:455.20px;top:63.82px;line-height:9px">Folder Name</div>
<div class="t g" style="left:495.00px;top:63.82px;line-height:9px">.&#165;res&#165;model&#165;scdx004</div>
<div class="t" style="left:455.20px;top:74.20px;line-height:9px">Vertex Co...</div>
<div class="h" style="left:455.60px;top:82.98px;">Included Materials</div>
<div class="h" style="left:455.20px;top:92.07px;line-height:9px">Material Te...</div>
<div class="t g" style="left:495.00px;top:92.07px;line-height:9px">scdx004(Material.005)</div>
<div class="t" style="left:455.20px;top:122.34px;transform:translateY(.8px)">Material 1</div>
<div class="t g" style="left:455.20px;top:156.23px;line-height:9px">Material Te...</div>
<div class="t g" style="left:495.00px;top:156.23px;line-height:9px">scdx004(scdx.004.normal)</div>
<div class="t" style="left:455.20px;top:186.51px;transform:translateY(.8px)">Material 2</div>
<div class="t g" style="left:455.20px;top:220.40px;line-height:9px">Material Te...</div>
<div class="t g" style="left:495.00px;top:220.40px;line-height:9px">scdx004(scdx.004.openmouse)</div>
<div class="t" style="left:455.20px;top:250.68px;transform:translateY(.8px)">Material 3</div>
<div class="t g" style="left:455.20px;top:284.57px;line-height:9px">Material Te...</div>
<div class="t g" style="left:495.00px;top:284.57px;line-height:9px">scdx004(scdx004.smile)</div>
<div class="t" style="left:455.20px;top:314.84px;transform:translateY(.8px)">Material 4</div>
<div class="t g" style="left:455.20px;top:348.73px;line-height:9px">Material Te...</div>
<div class="t g" style="left:495.00px;top:348.73px;line-height:9px">scdx004(scdx.004.closeeye)</div>
<div class="t" style="left:455.20px;top:379.01px;transform:translateY(.8px)">Material 5</div>
<div class="t g" style="left:455.20px;top:412.90px;line-height:9px">Material Te...</div>
<div class="t g" style="left:495.00px;top:412.90px;line-height:9px">scdx004(scdx.004.anger)</div>
<div class="t" style="left:3.20px;top:436.10px;color:#f2f2f2;font-size:6.08px">Manage all materials used in the game, including 3D models, textures, sprites, images, and sounds. 3D stamps and 2D stamps are also created here.</div>
<div class="t" style="left:726.00px;top:436.60px;color:#222;font-size:5.1px">OK</div>
<div class="t" style="left:766.00px;top:436.60px;color:#222;font-size:5.1px">Cancel</div>
</div>
</body></html>
